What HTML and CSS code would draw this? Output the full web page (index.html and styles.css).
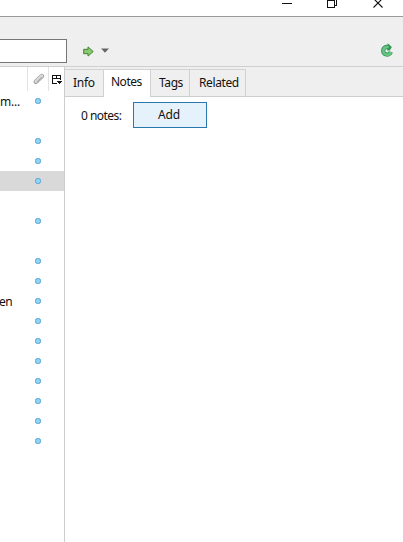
FILE: index.html
```html
<!DOCTYPE html>
<html lang="en">
<head>
<meta charset="utf-8">
<title>Library</title>
<link rel="stylesheet" href="styles.css">
</head>
<body>
<div class="window">
  <header class="titlebar">
    <svg width="118" height="16" viewBox="0 0 118 16" fill="none" stroke="#111" shape-rendering="crispEdges">
      <path d="M0 3.500h10"/>
      <path d="M45.500 .5h7v7h-7zM47.500 0v-2M47.500 -1.500h7v7h-2"/>
      <path d="M91.500 -1.500l9 9M100.500 -1.500l-9 9" shape-rendering="auto" stroke-width="1.100"/>
    </svg>
  </header>
  <div class="toolbar">
    <div class="search"></div>
    <svg class="locate" width="11" height="11" viewBox="0 0 11 11"><path d="M.7 3.300H5V.9L10.200 5.500 5 10.100V7.700H.7z" fill="#8ac873" stroke="#3f8530"/></svg>
    <svg class="caret" width="8" height="5" viewBox="0 0 8 5"><path d="M0 .5h8L4 4.800z" fill="#666"/></svg>
    <svg class="sync" width="14" height="15" viewBox="0 0 14 15"><path d="M8.500 3.800H6.800A3.900 3.900 0 1 0 10.800 8.800" fill="none" stroke="#2f9555" stroke-width="4.200"/><path d="M7.700 .2L11.800 4 9.800 7.500H7z" fill="#2f9555"/><path d="M8.700 4H6.800A3.900 3.900 0 1 0 11 8.800" fill="none" stroke="#6ac584" stroke-width="2.400"/></svg>
  </div>
  <main class="content">
    <section class="items">
      <div class="columns">
        <div class="col title"></div>
        <div class="col attach"><svg width="12" height="12" viewBox="0 0 12 12" fill="none" stroke-linecap="round"><path d="M3 8.700L8.800 3.200" stroke="#959595" stroke-width="4.600"/><path d="M3 8.500L8.800 3" stroke="#dadada" stroke-width="3.200"/><path d="M4 8.800L8.700 4.300" stroke="#999" stroke-width=".9"/></svg></div>
        <div class="col picker"><svg width="11" height="10" viewBox="0 0 11 10" shape-rendering="crispEdges"><path d="M5 8.500H.5v-8h8V5M0 3.500h9M4.500 1v3" fill="none" stroke="#111"/><path d="M5 6h5v1H9v1H8v1H7V8H6V7H5z" fill="#111"/></svg></div>
      </div>
      <div class="row"><span class="name">m...</span><i class="dot"></i></div>
      <div class="row"></div>
      <div class="row"><i class="dot"></i></div>
      <div class="row"><i class="dot"></i></div>
      <div class="row selected"><i class="dot"></i></div>
      <div class="row"></div>
      <div class="row"><i class="dot"></i></div>
      <div class="row"></div>
      <div class="row"><i class="dot"></i></div>
      <div class="row"><i class="dot"></i></div>
      <div class="row"><span class="name en">en</span><i class="dot"></i></div>
      <div class="row"><i class="dot"></i></div>
      <div class="row"><i class="dot"></i></div>
      <div class="row"><i class="dot"></i></div>
      <div class="row"><i class="dot"></i></div>
      <div class="row"><i class="dot"></i></div>
      <div class="row"><i class="dot"></i></div>
      <div class="row"><i class="dot"></i></div>
    </section>
    <section class="details">
      <nav class="tabs">
        <div class="tab info">Info</div>
        <div class="tab notes active">Notes</div>
        <div class="tab tags">Tags</div>
        <div class="tab related">Related</div>
      </nav>
      <div class="pane">
        <span class="count">0 notes:</span>
        <button class="add">Add</button>
      </div>
    </section>
  </main>
</div>
</body>
</html>
```

FILE: styles.css
```css
* { box-sizing: border-box; }
body {
  margin: 0;
  background: #fff;
  color: #111;
  font: 12px/16px "Noto Sans", "Open Sans", sans-serif;
  letter-spacing: -0.4px;
}
svg { display: block; flex: none; }
.window { width: 403px; height: 542px; display: flex; flex-direction: column; overflow: hidden; }
.titlebar { height: 17px; border-bottom: 1px solid #999; padding-left: 282px; }
.toolbar {
  height: 50px;
  display: flex;
  align-items: flex-start;
  background: #efefef;
  border-bottom: 1px solid #cfcfcf;
  padding: 18px 9px 0 0;
}
.search { width: 67px; height: 24px; margin-top: 4px; border: 1px solid #767676; border-left: 0; background: #fff; }
.locate { margin: 11px 0 0 16px; }
.caret { margin: 13px 0 0 7px; }
.sync { margin: 8px 0 0 auto; }
.content { flex: 1; display: flex; min-height: 0; }
.items { width: 65px; border-right: 1px solid #cdcdcd; }
.columns { height: 24px; display: flex; }
.col { border-right: 1px solid #e2e2e2; }
.title { width: 28px; }
.attach { width: 21px; padding: 6px 0 0 5px; }
.picker { width: 15px; padding: 8px 0 0 3px; border: 0; }
.row { height: 20px; display: flex; align-items: center; justify-content: flex-end; padding-right: 23px; }
.row.selected { background: #d9d9d9; }
.name { flex: 1; padding-top: 2px; letter-spacing: -0.2px; }
.name.en { margin-left: -1px; letter-spacing: -0.5px; }
.dot {
  width: 6px;
  height: 6px;
  border-radius: 2.5px;
  border: 1px solid #4fa5d3;
  background: #92d2f3;
}
.details { flex: 1; }
.tabs {
  height: 30px;
  display: flex;
  align-items: flex-end;
  padding-top: 2px;
  background: #efefef;
  border-bottom: 1px solid #cdcdcd;
}
.tab { height: 27px; border: solid #d2d2d2; border-width: 1px 1px 0 0; padding: 5px 0 0 8px; }
.tab.active { height: 28px; margin-bottom: -1px; background: #fff; padding: 4px 0 0 7px; letter-spacing: -0.5px; }
.info { width: 39px; letter-spacing: -0.3px; }
.notes { width: 47px; }
.tags { width: 39px; }
.related { width: 56px; padding-left: 9px; }
.pane { display: flex; align-items: center; padding: 5px 0 0 16px; }
.count { width: 52px; padding-top: 2px; letter-spacing: -0.55px; }
.add {
  width: 74px;
  height: 26px;
  padding: 0 2px 0 0;
  border: 1px solid #2878ad;
  background: #e5f1fb;
  color: #111;
  font: inherit;
  letter-spacing: -0.1px;
}
```
